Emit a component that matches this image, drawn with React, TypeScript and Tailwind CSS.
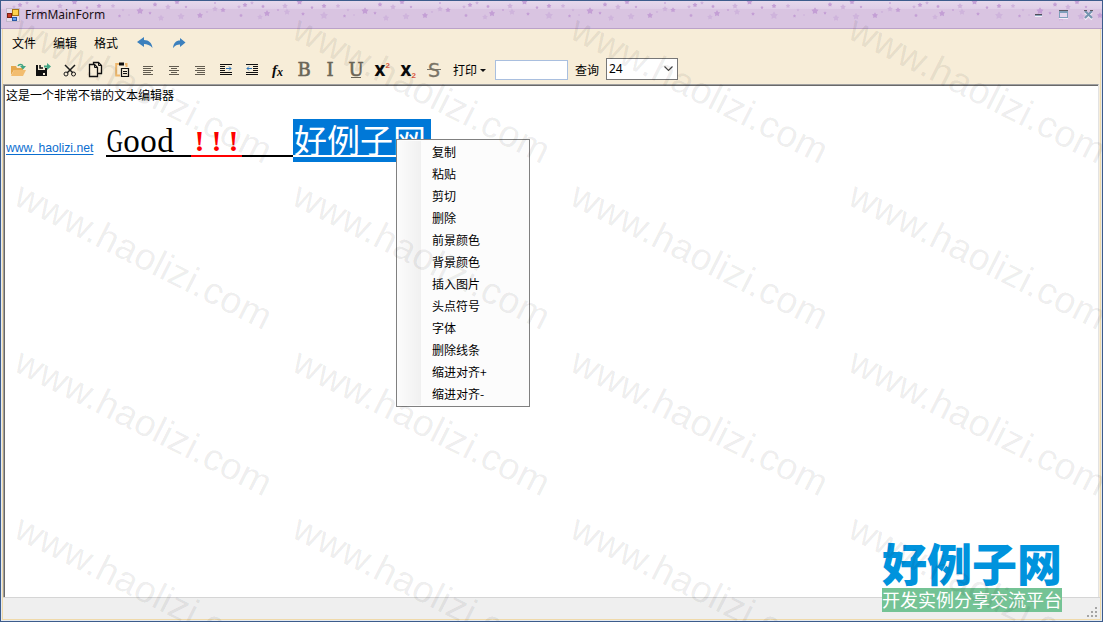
import type { ReactNode } from "react";

const menuItems = [
  "复制",
  "粘贴",
  "剪切",
  "删除",
  "前景颜色",
  "背景颜色",
  "插入图片",
  "头点符号",
  "字体",
  "删除线条",
  "缩进对齐+",
  "缩进对齐-",
];

// x, y, radius, strength
const stars: [number, number, number, number][] = [
  [5, 11, 3.8, 2], [20, 4.5, 2.5, 2], [42, 2, 2.8, 2], [15, 13, 1.8, 2],
  [33, 7, 3, 1], [26, 18, 3.5, 1], [46, 16.5, 3.8, 1], [51, 7, 1.5, 2],
  [65, 15.5, 3.2, 2], [80, 3, 1.2, 2], [72, 12, 1.5, 1], [80, 9, 3, 1],
  [88, 10, 2.8, 2], [104, 7, 2, 1], [110, 5, 2.6, 2], [117, 3, 2, 1],
  [106, 15.5, 2, 2], [125, 17, 3, 1], [128, 6.5, 2, 2], [132, 13.5, 3.4, 2],
  [143, 10, 1.3, 2], [150, 6, 3, 1], [152, 12, 3.4, 1], [164.5, 2, 3.2, 2],
  [168, 14, 2, 2], [177, 7.5, 1.8, 2], [189, 6, 2.6, 2], [189, 15.5, 4.2, 1],
  [203, 6, 2.4, 1], [209.5, 16, 1.8, 2], [213, 10, 1.6, 1], [219, 15, 1.2, 1],
];

const starPoints = (cx: number, cy: number, r: number) =>
  Array.from({ length: 10 }, (_, i) => {
    const a = -Math.PI / 2 + (i * Math.PI) / 5;
    const d = i % 2 ? r * 0.55 : r;
    return `${(cx + d * Math.cos(a)).toFixed(2)},${(cy + d * Math.sin(a)).toFixed(2)}`;
  }).join(" ");

const Icon = ({ children }: { children: ReactNode }) => (
  <div className="w-[26px] h-5 flex items-center justify-center shrink-0">
    <svg className="overflow-visible" width="18" height="18" viewBox="0 0 18 18" fill="none">
      {children}
    </svg>
  </div>
);

const AlignIcon = ({ widths }: { widths: [number, number][] }) => (
  <Icon>
    {widths.map(([x, w], i) => (
      <rect key={i} x={x} y={5 + i * 2} width={w} height="1" fill="#625c50" />
    ))}
  </Icon>
);

const IndentIcon = ({ flip }: { flip?: boolean }) => (
  <Icon>
    <path d="M3 3.5h12M3 13.5h12" stroke="#111" />
    <path
      d={flip ? "M10 5.5h5M10 7.5h5M10 9.5h5M3 11.5h12" : "M3 5.5h5M3 7.5h5M3 9.5h5M3 11.5h12"}
      stroke="#111"
    />
    <path
      d={flip ? "M4 7.5h5M6 5.5l-2 2 2 2" : "M9 7.5h5M12 5.5l2 2-2 2"}
      stroke="#2f78bd"
    />
  </Icon>
);

const LetterIcon = ({ char, deco }: { char: string; deco?: ReactNode }) => (
  <Icon>
    <text x="9" y="15" textAnchor="middle" fontFamily="DejaVu Serif" fontSize="18" fill="#6b6557" stroke="#6b6557" strokeWidth=".6">
      {char}
    </text>
    {deco}
  </Icon>
);

const ScriptIcon = ({ y }: { y: number }) => (
  <Icon>
    <text x="1.5" y="15" fontFamily="Open Sans" fontWeight="800" fontSize="15" fill="#0a0a0a">
      X
    </text>
    <text x="12.5" y={y} fontFamily="Liberation Sans" fontWeight="700" fontSize="8" fill="#d8573f">
      2
    </text>
  </Icon>
);

const TitleBar = () => (
  <div className="relative h-7 shrink-0 bg-[#d9c4e1] border-b border-[#bba2c8] flex items-center">
    <svg className="absolute inset-0" width="1101" height="27">
      <defs>
        <linearGradient id="shine" x2="0" y2="1">
          <stop stopColor="#e6d8ec" />
          <stop offset="1" stopColor="#dfcee7" />
        </linearGradient>
        <pattern id="stars" x="134" y="-1" width="225" height="28" patternUnits="userSpaceOnUse">
          {stars.map(([x, y, r, s], i) => (
            <polygon key={i} points={starPoints(x, y, r)} fill={s === 2 ? "#c49fd5" : "#cfb4dc"} />
          ))}
        </pattern>
      </defs>
      <rect width="1101" height="8" fill="url(#shine)" />
      <rect width="1101" height="27" fill="url(#stars)" />
    </svg>
    <svg className="relative ml-[5px]" width="14" height="14" viewBox="0 0 14 14">
      <rect x=".5" y=".5" width="13" height="13" fill="#e4dbea" stroke="#c3b8cb" />
      <rect x="6.5" y="1.5" width="6" height="6" fill="#ffd34d" stroke="#a87512" />
      <rect x="1.5" y="5.5" width="4" height="4" fill="#c93a27" stroke="#7d1e12" />
      <rect x="6.5" y="9.5" width="4" height="3" fill="#65a2ef" stroke="#2757a4" />
    </svg>
    <span className="relative ml-[5px] font-['Noto_Sans','Open_Sans',sans-serif] text-[12px] leading-4 text-[#1a1016]">
      FrmMainForm
    </span>
    <svg className="relative ml-auto mr-2" width="60" height="12" viewBox="0 0 60 12" fill="none">
      <path d="M1 5.5h7" stroke="#514d58" />
      <path d="M1 6.5h7" stroke="#89a3ba" />
      <path d="M1 7.5h7" stroke="#f4eef7" />
      <path d="M25 9.5h9" stroke="#f4eef7" />
      <rect x="25.5" y="2.5" width="8" height="6" fill="#e4d6ec" stroke="#7f9fba" />
      <path d="M25 1.5h9" stroke="#5d5961" />
      <path d="M25 3h9" stroke="#7f9fba" strokeWidth="2" />
      <path d="M51 3.5l7 7M58 3.5l-7 7" stroke="#f4eef7" strokeWidth="2" />
      <path d="M51 2l7 7M58 2l-7 7" stroke="#7595b0" strokeWidth="2" />
      <path d="M50 1.5h3M56 1.5h3" stroke="#5d5961" />
    </svg>
  </div>
);

const Toolbar = () => (
  <div className="h-[26px] flex items-center pl-0.5">
    <Icon>
      <path d="M2 14V5h5l1 2h6v2H5z" fill="#e5a74c" />
      <path d="M2 15l3-6h12l-3 6z" fill="#f2bd70" />
      <path d="M9 5c1-2 4-2 5 0" stroke="#41a583" strokeWidth="1.5" />
      <path d="M11 5h6l-3 3.5z" fill="#41a583" />
    </Icon>
    <Icon>
      <path d="M1 4h2v5h7V7h2v8H1z" fill="#111" />
      <path d="M5 4v3h3" stroke="#111" strokeWidth="1.5" />
      <path d="M8 12h2v2H8z" fill="#f7edd8" />
      <path d="M9 5.5h4" stroke="#41a583" strokeWidth="2" />
      <path d="M12 2l4 3.5L12 9z" fill="#41a583" />
    </Icon>
    <Icon>
      <path d="M4 4l8 8M14 4l-8 8" stroke="#1c1c1c" strokeWidth="1.5" />
      <circle cx="5" cy="13" r="2" stroke="#1c1c1c" />
      <circle cx="12.5" cy="13" r="2" stroke="#1c1c1c" />
    </Icon>
    <Icon>
      <path d="M6.5 3.500V1.500H11.500L14.500 4.500V12.500H11" stroke="#111" strokeWidth="1.300" />
      <path d="M2.500 3.500H7.500L10.500 6.500V15.500H2.500z" fill="#f7edd8" stroke="#111" strokeWidth="1.300" />
      <path d="M7.500 3.500v3h3M11.500 1.500v3h3" stroke="#111" />
    </Icon>
    <Icon>
      <path d="M6 3H3.200v11.500H7M12 3h1.500v3" stroke="#eeb66b" strokeWidth="2" />
      <path d="M6 1.500h5v3H6z" fill="#111" />
      <path d="M8.500 7.500h7v8h-7z" fill="#f7edd8" stroke="#111" strokeWidth="1.200" />
      <path d="M10 10.500h4M10 12.500h4" stroke="#111" />
    </Icon>
    <AlignIcon widths={[[4, 10], [4, 8], [4, 10], [4, 8], [4, 10]]} />
    <AlignIcon widths={[[4, 10], [6, 6], [4, 10], [6, 6], [4, 10]]} />
    <AlignIcon widths={[[4, 10], [6, 8], [4, 10], [6, 8], [4, 10]]} />
    <IndentIcon />
    <IndentIcon flip />
    <Icon>
      <text x="3" y="14" fontFamily="Liberation Serif" fontStyle="italic" fontWeight="700" fontSize="15" fill="#0a0a0a">
        f
      </text>
      <text x="8" y="15" fontFamily="Liberation Serif" fontStyle="italic" fontWeight="700" fontSize="12" fill="#0a0a0a">
        x
      </text>
    </Icon>
    <LetterIcon char="B" />
    <LetterIcon char="I" />
    <LetterIcon char="U" deco={<path d="M4 16.500h10" stroke="#6b6557" />} />
    <ScriptIcon y={7} />
    <ScriptIcon y={17} />
    <Icon>
      <text x="9" y="15.500" textAnchor="middle" fontFamily="DejaVu Sans" fontSize="19" fill="#7a7466" stroke="#7a7466" strokeWidth=".3">
        S
      </text>
      <path d="M2 8.500h14" stroke="#7a7466" />
    </Icon>
    <span className="ml-1.5 w-6 whitespace-nowrap">打印</span>
    <svg className="ml-[3px]" width="6" height="3" viewBox="0 0 6 3">
      <path d="M0 0h6L3 3z" fill="#111" />
    </svg>
    <div className="ml-[9px] w-[73px] h-5 bg-white border border-[#a9bfdf]" />
    <span className="ml-[7px] w-6 whitespace-nowrap">查询</span>
    <div className="ml-[7px] -mt-0.5 w-[72px] h-[22px] bg-white border border-[#777] flex items-center justify-between pl-0.5 pr-1">
      <span className="font-['Noto_Sans',sans-serif] text-[12px] leading-4">24</span>
      <svg width="9" height="6" viewBox="0 0 9 6" fill="none">
        <path d="M.5 .5l4 4 4-4" stroke="#444" strokeWidth="1.200" />
      </svg>
    </div>
  </div>
);

const Editor = () => (
  <div className="flex-1 mr-px bg-white border-l border-t border-[#9f9f9f] border-r border-r-[#e3e3e3]">
    <div className="h-full border-l border-t border-[#696969]">
      <p className="h-[33px] pl-px pt-px leading-4">这是一个非常不错的文本编辑器</p>
      <div className="flex pl-px h-[43px] font-['Liberation_Serif',serif] text-[33px] leading-[44px]">
        <span className="w-[88px] mr-3 pt-[21px] font-['Liberation_Sans',sans-serif] text-[12.2px] leading-4 text-[#0b6ed0] whitespace-nowrap underline underline-offset-2">
          www. haolizi.net
        </span>
        <div className="flex h-[38px] w-[85px] border-b-2 border-black">
          {["G", "o", "o", "d"].map((c, i) => (
            <span key={i} className="w-[17px] flex justify-center">
              <span className={i === 0 ? "scale-x-[0.68]" : ""}>{c}</span>
            </span>
          ))}
        </div>
        <div className="flex h-[38px] w-[51px] border-b-2 border-[#f00] text-[#f00] font-bold text-[30px]">
          {["!", "!", "!"].map((c, i) => (
            <span key={i} className="w-[17px] text-center">
              {c}
            </span>
          ))}
        </div>
        <div className="h-[38px] w-[51px] border-b-2 border-black" />
        <div className="w-[138px] h-[43px] bg-[#0078d7]">
          <div className="h-[38px] border-b-2 border-white text-white font-normal font-['Noto_Sans_CJK_SC',sans-serif] text-[33px] leading-[40px] pl-px whitespace-nowrap">
            好例子网
          </div>
        </div>
      </div>
    </div>
  </div>
);

const ContextMenu = () => (
  <div className="absolute left-[395px] top-[138px] w-[134px] h-[268px] border border-[#808080] bg-[#fcfcfc] py-px">
    <ul className="bg-[linear-gradient(to_right,#fcfcfc,#f0f0f0_24px,#fcfcfc_24px)]">
      {menuItems.map((item) => (
        <li key={item} className="h-[22px] pl-[35px] leading-[21px]">
          {item}
        </li>
      ))}
    </ul>
  </div>
);

const Logo = () => (
  <div className="absolute left-[881px] top-[538px] w-[180px] whitespace-nowrap">
    <div className="h-[49px] text-[45px] leading-[47px] font-black text-[#0093dd]">好例子网</div>
    <div className="h-6 bg-[#74c395] text-white text-[18px] leading-[22px]">开发实例分享交流平台</div>
  </div>
);

const Watermark = () => (
  <svg className="absolute -left-px -top-px pointer-events-none" width="1103" height="622">
    {[0, 1, 2, 3].map((row) =>
      [0, 1, 2, 3].map((col) => (
        <text
          key={`${row}-${col}`}
          transform={`translate(${12 + col * 278} ${37.5 + row * 166.3}) rotate(26.7)`}
          textLength="282"
          fontFamily="Liberation Sans"
          fontSize="37.5"
          fill="#000"
          fillOpacity=".075"
        >
          www.haolizi.com
        </text>
      ))
    )}
  </svg>
);

const App = () => {
  return (
    <div className="relative w-[1103px] h-[622px] overflow-hidden bg-[#f7edd8] border border-[#3d5c8c] flex flex-col font-['Noto_Sans_CJK_SC',sans-serif] text-[12px] text-black">
      <TitleBar />
      <div className="flex-1 flex flex-col border-x border-b border-[#e3eaf2]">
        <div className="flex-1 flex flex-col border-x border-b border-[#efd9a9]">
          <div className="h-7 flex items-center pl-[9px] gap-[17px]">
            <span>文件</span>
            <span>编辑</span>
            <span>格式</span>
            <svg className="ml-0.5" width="16" height="12" viewBox="0 0 16 12">
              <path d="M0 5L7 0v3c5 0 8 3 8.500 8C13 8 10 7 7 7v3z" fill="#3c80bd" />
            </svg>
            <svg className="ml-[3px]" width="13" height="12" viewBox="0 0 13 12">
              <path d="M12.500 5.500L7 1v2.500C3 3.500 .5 6 0 11c2-2.500 4-3.500 7-3.500V10z" fill="#3c80bd" />
            </svg>
          </div>
          <Toolbar />
          <div className="h-px" />
          <Editor />
          <div className="h-[22px] bg-[#efefef] border-t border-[#d5d5d5] flex items-end justify-end">
            <svg width="14" height="14" viewBox="0 0 14 14" fill="#a5a5a5">
              <path d="M9 2h2v2H9zM9 6h2v2H9zM5 6h2v2H5zM9 10h2v2H9zM5 10h2v2H5zM1 10h2v2H1z" />
            </svg>
          </div>
        </div>
      </div>
      <ContextMenu />
      <Logo />
      <Watermark />
    </div>
  );
};

export default App;
